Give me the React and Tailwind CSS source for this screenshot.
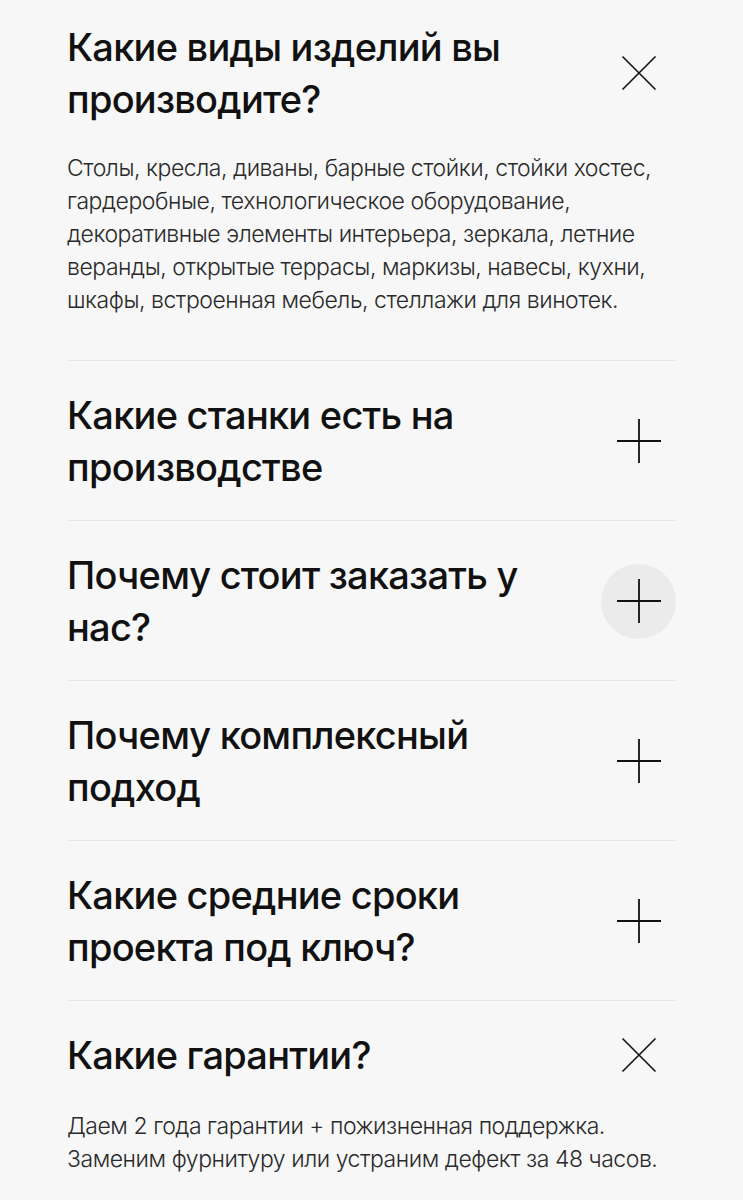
import { useState } from "react";

const faq = [
  {
    q: "Какие виды изделий вы производите?",
    a: "Столы, кресла, диваны, барные стойки, стойки хостес, гардеробные, технологическое оборудование, декоративные элементы интерьера, зеркала, летние веранды, открытые террасы, маркизы, навесы, кухни, шкафы, встроенная мебель, стеллажи для винотек.",
  },
  { q: "Какие станки есть на производстве", a: "" },
  { q: "Почему стоит заказать у нас?", a: "" },
  { q: "Почему комплексный подход", a: "" },
  { q: "Какие средние сроки проекта под ключ?", a: "" },
  {
    q: "Какие гарантии?",
    a: "Даем 2 года гарантии + пожизненная поддержка. Заменим фурнитуру или устраним дефект за 48 часов.",
  },
];

const CloseIcon = () => (
  <svg width="36" height="36" viewBox="0 0 36 36" fill="none">
    <path d="M1.5 1.5L34.5 34.5M34.5 1.5L1.5 34.5" stroke="#111" strokeWidth="1.6" />
  </svg>
);

const PlusIcon = () => (
  <svg width="46" height="46" viewBox="0 0 46 46" fill="none">
    <path d="M23 1V45M1 23H45" stroke="#111" strokeWidth="1.8" />
  </svg>
);

function Item({ item, open, hovered, onToggle, first, last }) {
  return (
    <div
      className={
        first
          ? "pt-[21px] pb-[43px] border-b border-[#e8e8e8]"
          : last
          ? "pt-[28px] pb-[40px]"
          : "pt-[28px] pb-[27px] border-b border-[#e8e8e8]"
      }
    >
      <button
        type="button"
        onClick={onToggle}
        className="flex w-full items-center justify-between gap-4 text-left"
      >
        <span className="max-w-[470px] text-[38px] font-medium leading-[52px] tracking-[-0.02em] text-[#111]">
          {item.q}
        </span>
        {/* the hover circle overhangs the row so it doesn't change its height */}
        <span
          className={`-my-3 flex h-[75px] w-[75px] shrink-0 items-center justify-center rounded-full ${
            hovered ? "bg-[#ebebeb]" : ""
          }`}
        >
          {open ? <CloseIcon /> : <PlusIcon />}
        </span>
      </button>
      {open && item.a && (
        <p
          className={`${
            first ? "mt-[27px]" : "mt-[29px]"
          } text-[23px] font-light leading-[33px] tracking-[-0.02em] text-[#2a2a2a]`}
        >
          {item.a}
        </p>
      )}
    </div>
  );
}

export default function App() {
  const [openIds, setOpenIds] = useState([0, 5]);

  const toggle = (i) =>
    setOpenIds((ids) => (ids.includes(i) ? ids.filter((x) => x !== i) : [...ids, i]));

  return (
    <div
      className="min-h-[1200px] bg-[#f7f7f7] px-[67px]"
      style={{ fontFamily: "Inter, 'Noto Sans', sans-serif" }}
    >
      <div className="flex flex-col">
        {faq.map((item, i) => (
          <Item
            key={item.q}
            item={item}
            open={openIds.includes(i)}
            hovered={i === 2}
            first={i === 0}
            last={i === faq.length - 1}
            onToggle={() => toggle(i)}
          />
        ))}
      </div>
    </div>
  );
}
